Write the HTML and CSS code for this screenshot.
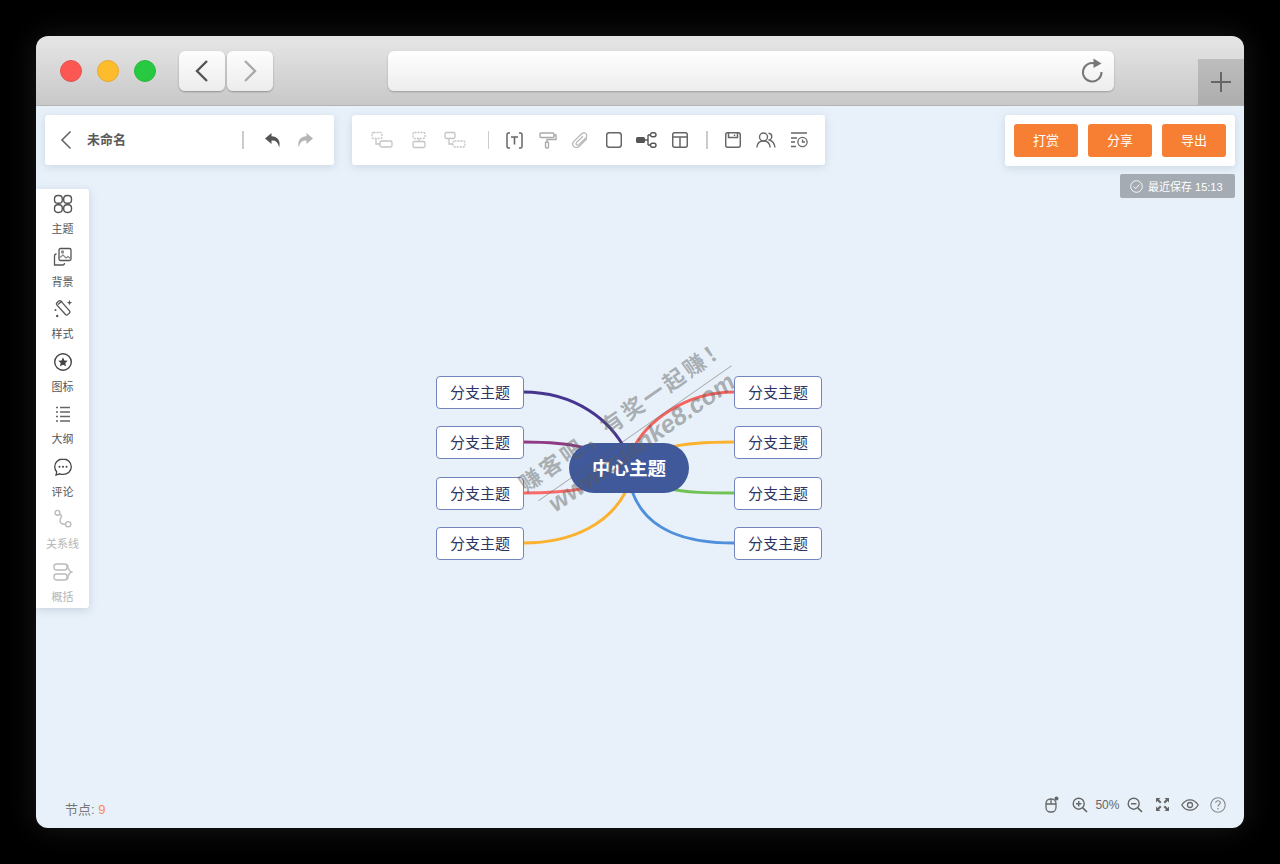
FILE: index.html
```html
<!DOCTYPE html>
<html lang="zh-CN">
<head>
    <meta charset="UTF-8">
    <title>未命名</title>
    <link rel="stylesheet" href="styles.css">
</head>
<body>

<div class="window">

    <!-- browser chrome -->
    <div class="titlebar">
        <div class="lights">
            <span class="light red"></span>
            <span class="light yellow"></span>
            <span class="light green"></span>
        </div>
        <div class="nav-pair">
            <div class="nav-btn">
                <svg width="18" height="24" viewBox="0 0 18 24"><path d="M14 2 L4 12 L14 22" class="chev dark"/></svg>
            </div>
            <div class="nav-btn">
                <svg width="18" height="24" viewBox="0 0 18 24"><path d="M4 2 L14 12 L4 22" class="chev light-chev"/></svg>
            </div>
        </div>
        <div class="address">
            <svg width="24" height="26" viewBox="0 0 24 26"><path d="M15.5 5.6 A9.3 9.3 0 1 0 21.5 14" fill="none" stroke="#777" stroke-width="2"/><path d="M13.5 0.5 L21.5 5.5 L13.5 10 Z" fill="#777"/></svg>
        </div>
        <div class="new-tab">
            <svg width="20" height="20" viewBox="0 0 20 20"><path d="M10 0 V20 M0 10 H20" stroke="#666" stroke-width="2"/></svg>
        </div>
    </div>

    <div class="canvas">

        <div class="top-row">
            <div class="panel file-panel">
                <svg class="back" width="12" height="20" viewBox="0 0 12 20"><path d="M10.5 1.5 L2 10 L10.5 18.5" fill="none" stroke="#666" stroke-width="1.6"/></svg>
                <span class="doc-name">未命名</span>
                <span class="sep sep-file"></span>
                <svg class="ico" width="18" height="18" viewBox="0 0 18 18"><path d="M7.5 2 L1 7.5 L7.5 13 V9.6 C11.5 9.4 14 11 15.2 16.5 C16.8 10 14 5.6 7.5 5.2 Z" fill="#555"/></svg>
                <svg class="ico redo" width="18" height="18" viewBox="0 0 18 18"><path d="M10.5 2 L17 7.5 L10.5 13 V9.6 C6.5 9.4 4 11 2.8 16.5 C1.2 10 4 5.6 10.5 5.2 Z" fill="#b5b5b5"/></svg>
            </div>

            <div class="panel tool-panel">
                <div class="tool-group wide">
                    <span class="cell"><svg width="22" height="18" viewBox="0 0 22 18"><g fill="none" stroke="#c4c4c4" stroke-width="1.3"><rect x="1" y="1.5" width="10" height="6" rx="1.5" stroke-dasharray="2 1"/><rect x="9" y="10" width="12" height="6" rx="1.5"/><path d="M5 7.5 V13 H9"/></g></svg></span>
                    <span class="cell"><svg width="14" height="18" viewBox="0 0 14 18"><g fill="none" stroke="#c4c4c4" stroke-width="1.3"><rect x="1" y="1.5" width="12" height="6" rx="1.5" stroke-dasharray="2 1"/><rect x="1" y="10.5" width="12" height="6" rx="1.5"/><path d="M7 7.5 V10.5"/></g></svg></span>
                    <span class="cell"><svg width="22" height="18" viewBox="0 0 22 18"><g fill="none" stroke="#c4c4c4" stroke-width="1.3"><rect x="1" y="1.5" width="10" height="6" rx="1.5"/><rect x="9" y="10" width="12" height="6" rx="1.5" stroke-dasharray="2 1"/><path d="M5 7.5 V13 H9"/></g></svg></span>
                </div>
                <span class="sep"></span>
                <div class="tool-group">
                    <span class="cell"><svg width="17" height="17" viewBox="0 0 17 17"><g fill="none" stroke="#666" stroke-width="1.5"><path d="M4 1 H2.5 Q1 1 1 2.5 V14.5 Q1 16 2.5 16 H4 M13 1 H14.5 Q16 1 16 2.5 V14.5 Q16 16 14.5 16 H13"/><path d="M5 5 H12 M8.5 5 V12.5" stroke-width="1.6"/></g></svg></span>
                    <span class="cell"><svg width="18" height="17" viewBox="0 0 18 17"><g fill="none" stroke="#aaa" stroke-width="1.4"><rect x="1" y="1" width="14" height="4.5" rx="1"/><path d="M15 3 H17 V7.5 H8 V10"/><rect x="6.5" y="10" width="3" height="6" rx="1"/></g></svg></span>
                    <span class="cell"><svg width="17" height="17" viewBox="0 0 17 17"><path d="M15 6.5 L7.5 14 C5.5 16 2.8 15.8 1.6 14.4 C0.3 13 0.4 10.8 2 9.2 L9.5 2 C11 0.6 13 0.8 14 1.8 C15 2.9 15 4.6 13.7 5.9 L6.8 12.6 C6 13.3 5 13.2 4.4 12.6 C3.9 12 4 11.2 4.7 10.4 L11 4.3" fill="none" stroke="#b5b5b5" stroke-width="1.2"/></svg></span>
                    <span class="cell"><svg width="16" height="16" viewBox="0 0 16 16"><rect x="0.7" y="0.7" width="14.6" height="14.6" rx="2.5" fill="none" stroke="#666" stroke-width="1.5"/></svg></span>
                    <span class="cell"><svg width="21" height="16" viewBox="0 0 21 16"><rect x="0" y="5" width="9" height="6" rx="1.5" fill="#555"/><g fill="none" stroke="#555" stroke-width="1.4"><path d="M9 8 H12 M12 3 V13"/><rect x="14.5" y="0.7" width="5.5" height="4" rx="2"/><rect x="14.5" y="11.3" width="5.5" height="4" rx="2"/><path d="M12 3 H14.5 M12 13 H14.5"/></g></svg></span>
                    <span class="cell"><svg width="16" height="16" viewBox="0 0 16 16"><g fill="none" stroke="#666" stroke-width="1.5"><rect x="0.7" y="0.7" width="14.6" height="14.6" rx="2"/><path d="M0.7 5 H15.3 M8 5 V15.3"/></g></svg></span>
                </div>
                <span class="sep sep-b"></span>
                <div class="tool-group">
                    <span class="cell"><svg width="16" height="16" viewBox="0 0 16 16"><g fill="none" stroke="#666" stroke-width="1.5"><rect x="0.7" y="0.7" width="14.6" height="14.6" rx="2"/><path d="M3.5 0.7 V5.5 H12.5 V0.7 M9.5 2.5 V4"/></g></svg></span>
                    <span class="cell"><svg width="20" height="16" viewBox="0 0 20 16"><g fill="none" stroke="#666" stroke-width="1.4"><circle cx="7.5" cy="5" r="4"/><path d="M0.8 15.5 C1.2 11 4 9 7.5 9 C11 9 13.8 11 14.2 15.5"/><path d="M12.5 1.2 C15 1.6 16 3.2 15.8 5 C15.6 6.6 14.6 7.6 13.5 8 C16.5 9 18.6 11.5 19 15.5"/></g></svg></span>
                    <span class="cell"><svg width="18" height="16" viewBox="0 0 18 16"><g fill="none" stroke="#666" stroke-width="1.3"><path d="M1 1 H17 M1 6 H7 M1 10 H5 M1 14.5 H6"/><circle cx="12.5" cy="10" r="4.6"/><path d="M12.5 7.5 V10 H15"/></g></svg></span>
                </div>
            </div>

            <div class="panel action-panel">
                <button class="action">打赏</button>
                <button class="action">分享</button>
                <button class="action">导出</button>
            </div>
        </div>

        <div class="saved">
            <svg width="13" height="13" viewBox="0 0 13 13"><circle cx="6.5" cy="6.5" r="5.8" fill="none" stroke="#fff" stroke-width="0.9"/><path d="M3.6 6.6 L5.7 8.6 L9.4 4.6" fill="none" stroke="#fff" stroke-width="0.9"/></svg>
            最近保存 15:13
        </div>

        <!-- left side menu -->
        <div class="side-menu">
            <div class="side-item">
                <svg width="20" height="20" viewBox="0 0 20 20"><g fill="none" stroke="#555" stroke-width="1.4"><rect x="1.5" y="1.5" width="7.8" height="7.8" rx="3.4"/><rect x="10.7" y="1.5" width="7.8" height="7.8" rx="3.4"/><rect x="1.5" y="10.7" width="7.8" height="7.8" rx="3.4"/><rect x="10.7" y="10.7" width="7.8" height="7.8" rx="3.4"/></g></svg>
                <span>主题</span>
            </div>
            <div class="side-item">
                <svg width="20" height="20" viewBox="0 0 20 20"><g fill="none" stroke="#555" stroke-width="1.3"><rect x="6" y="1.5" width="12" height="12" rx="1.5"/><path d="M6 11 L10 8 L13 11 L15 9.5 L18 12" stroke="#888"/><circle cx="9.5" cy="5" r="1" stroke="#888"/><path d="M3.5 7 Q1.5 7 1.5 9 V18 H10 Q11.5 18 11.5 16"/></g></svg>
                <span>背景</span>
            </div>
            <div class="side-item">
                <svg width="20" height="20" viewBox="0 0 20 20"><g fill="none" stroke="#555" stroke-width="1.3"><rect x="7.5" y="1" width="5.5" height="16" rx="1.5" transform="rotate(-42 10 9)"/><path d="M5 5.5 L9 2"/></g><path d="M16.5 1 L17.3 3 L19.2 3.6 L17.3 4.4 L16.5 6.3 L15.7 4.4 L13.9 3.6 L15.7 3 Z" fill="#555"/><circle cx="2.5" cy="11" r="1" fill="#555"/><circle cx="4.2" cy="17" r="1.2" fill="#555"/></svg>
                <span>样式</span>
            </div>
            <div class="side-item">
                <svg width="20" height="20" viewBox="0 0 20 20"><circle cx="10" cy="10" r="8.3" fill="none" stroke="#444" stroke-width="1.4"/><path d="M10 5.3 L11.4 8.4 L14.8 8.8 L12.3 11 L13 14.3 L10 12.7 L7 14.3 L7.7 11 L5.2 8.8 L8.6 8.4 Z" fill="#444"/></svg>
                <span>图标</span>
            </div>
            <div class="side-item">
                <svg width="20" height="20" viewBox="0 0 20 20"><g stroke="#666" stroke-width="1.3"><path d="M3 3.5 H5 M7 3.5 H17 M3 8 H5 M7 8 H17 M3 12.5 H5 M7 12.5 H17 M3 17 H5 M7 17 H17"/></g></svg>
                <span>大纲</span>
            </div>
            <div class="side-item">
                <svg width="20" height="20" viewBox="0 0 20 20"><path d="M10 2 C5.2 2 1.7 5.4 1.7 9.7 C1.7 11.7 2.5 13.5 3.7 14.8 L3 18 L6.6 16.8 C7.6 17.2 8.8 17.4 10 17.4 C14.8 17.4 18.3 14 18.3 9.7 C18.3 5.4 14.8 2 10 2 Z" fill="none" stroke="#444" stroke-width="1.3"/><circle cx="6.5" cy="9.7" r="1" fill="#444"/><circle cx="10" cy="9.7" r="1" fill="#444"/><circle cx="13.5" cy="9.7" r="1" fill="#444"/></svg>
                <span>评论</span>
            </div>
            <div class="side-item off">
                <svg width="20" height="20" viewBox="0 0 20 20"><g fill="none" stroke="#bbb" stroke-width="1.4"><circle cx="4.5" cy="3.8" r="2.4"/><circle cx="15.2" cy="15.2" r="2.6"/><path d="M6.5 5.5 C11 6.5 6.5 9.5 7 12 C7.5 14.8 10.5 15.5 12.6 15.2"/></g></svg>
                <span>关系线</span>
            </div>
            <div class="side-item off">
                <svg width="20" height="20" viewBox="0 0 20 20"><g fill="none" stroke="#bbb" stroke-width="1.4"><rect x="1" y="2" width="13" height="6" rx="2.5"/><rect x="1" y="12" width="13" height="6" rx="2.5"/><path d="M14.5 2.5 C15 6 15.5 9 18.5 10 C15.5 11 15 14 14.5 17.5"/></g></svg>
                <span>概括</span>
            </div>
        </div>

        <!-- mind map -->
        <svg class="links" width="1208" height="722" viewBox="0 0 1208 722">
            <g fill="none" stroke-width="3">
                <path d="M487 286 C540 286 575 315 590 345" stroke="#46358f"/>
                <path d="M487 336 C510 336 530 337 550 342" stroke="#8f3a85"/>
                <path d="M487 387 C505 387 530 386 550 382" stroke="#fb6a68"/>
                <path d="M487 437 C540 437 575 415 590 385" stroke="#fcb12f"/>
                <path d="M698 286 C650 286 610 315 596 345" stroke="#f4645f"/>
                <path d="M698 336 C675 336 650 337 630 342" stroke="#fcb12f"/>
                <path d="M698 387 C675 387 650 387 630 382" stroke="#6fc253"/>
                <path d="M698 437 C650 437 610 425 596 385" stroke="#4f8fdc"/>
            </g>
        </svg>

        <div class="node center">中心主题</div>
        <div class="node branch l1">分支主题</div>
        <div class="node branch l2">分支主题</div>
        <div class="node branch l3">分支主题</div>
        <div class="node branch l4">分支主题</div>
        <div class="node branch r1">分支主题</div>
        <div class="node branch r2">分支主题</div>
        <div class="node branch r3">分支主题</div>
        <div class="node branch r4">分支主题</div>

        <div class="watermark">
            <div class="wm-cn">赚客吧，有奖一起赚！</div>
            <div class="wm-url">www.zuanke8.com</div>
        </div>

        <div class="status-bar">
            <div class="count">节点: <b>9</b></div>
            <div class="zoom-tools">
                <svg width="14" height="17" viewBox="0 0 14 17"><g fill="none" stroke="#666" stroke-width="1.3"><rect x="1" y="3" width="10" height="13" rx="4.5"/><path d="M1 8 H11 M6 3 V8"/></g><circle cx="11.5" cy="2.5" r="2" fill="#666"/></svg>
                <svg width="16" height="16" viewBox="0 0 16 16"><g fill="none" stroke="#666" stroke-width="1.4"><circle cx="6.7" cy="6.7" r="5.5"/><path d="M10.8 10.8 L15 15" stroke-width="1.7"/><path d="M4 6.7 H9.4 M6.7 4 V9.4"/></g></svg>
                <span class="pct">50%</span>
                <svg width="16" height="16" viewBox="0 0 16 16"><g fill="none" stroke="#666" stroke-width="1.4"><circle cx="6.7" cy="6.7" r="5.5"/><path d="M10.8 10.8 L15 15" stroke-width="1.7"/><path d="M4 6.7 H9.4"/></g></svg>
                <svg width="13" height="13" viewBox="0 0 13 13"><g fill="#666"><path d="M0 0 H4.5 L3 1.5 L5.5 4 L4 5.5 L1.5 3 L0 4.5 Z"/><path d="M13 0 H8.5 L10 1.5 L7.5 4 L9 5.5 L11.5 3 L13 4.5 Z"/><path d="M0 13 H4.5 L3 11.5 L5.5 9 L4 7.5 L1.5 10 L0 8.5 Z"/><path d="M13 13 H8.5 L10 11.5 L7.5 9 L9 7.5 L11.5 10 L13 8.5 Z"/></g></svg>
                <svg width="18" height="12" viewBox="0 0 18 12"><g fill="none" stroke="#666" stroke-width="1.3"><path d="M0.8 6 C3 2.4 5.8 0.8 9 0.8 C12.2 0.8 15 2.4 17.2 6 C15 9.6 12.2 11.2 9 11.2 C5.8 11.2 3 9.6 0.8 6 Z"/><circle cx="9" cy="6" r="2.5"/></g></svg>
                <svg width="16" height="16" viewBox="0 0 16 16"><circle cx="8" cy="8" r="7.2" fill="none" stroke="#888" stroke-width="1.1"/><path d="M5.7 6 C5.7 4.5 6.8 3.8 8 3.8 C9.3 3.8 10.3 4.6 10.3 5.8 C10.3 7.4 8 7.6 8 9.6" fill="none" stroke="#888" stroke-width="1.1"/><circle cx="8" cy="11.7" r="0.8" fill="#888"/></svg>
            </div>
        </div>
    </div>
</div>

</body>
</html>
```

FILE: styles.css
```css
* {
    box-sizing: border-box;
}

body {
    margin: 0;
    width: 1280px;
    height: 864px;
    overflow: hidden;
    background: #000;
    padding: 36px;
    font-family: "Liberation Sans", "Noto Sans CJK SC", sans-serif;
}

.window {
    width: 1208px;
    height: 792px;
    border-radius: 12px;
    overflow: hidden;
    display: flex;
    flex-direction: column;
    box-shadow: 0 0 30px rgba(255, 255, 255, 0.1);
}

/* browser chrome */
.titlebar {
    height: 70px;
    flex: none;
    display: flex;
    background: linear-gradient(#e6e6e6, #c8c8c8);
    border-bottom: 1px solid #b4b4b4;
    padding-left: 24px;
    padding-top: 15px;
}

.lights {
    display: flex;
    gap: 15px;
    margin-top: 9px;
    height: 22px;
}

.light {
    width: 22px;
    height: 22px;
    border-radius: 50%;
}

.red { background: #fc5753; border: 1px solid #e5524e; }
.yellow { background: #fdbc2c; border: 1px solid #eaa92a; }
.green { background: #26c940; border: 1px solid #27b93b; }

.nav-pair {
    display: flex;
    gap: 2px;
    margin-left: 23px;
}

.nav-btn {
    width: 46px;
    height: 40px;
    border-radius: 6px;
    background: linear-gradient(#fdfdfd, #ececec);
    box-shadow: 0 1px 2px rgba(0, 0, 0, 0.3);
    display: flex;
    align-items: center;
    justify-content: center;
}

.chev {
    fill: none;
    stroke-width: 2.4;
}

.chev.dark { stroke: #555; }
.chev.light-chev { stroke: #aaa; }

.address {
    width: 726px;
    height: 40px;
    margin-left: 115px;
    border-radius: 6px;
    background: linear-gradient(#fff, #ededed);
    box-shadow: 0 1px 2px rgba(0, 0, 0, 0.25);
    display: flex;
    align-items: center;
    justify-content: flex-end;
    padding-right: 10px;
}

.new-tab {
    width: 46px;
    height: 46px;
    margin-left: 84px;
    margin-top: 8px;
    background: linear-gradient(#bdbdbd, #adadad);
    display: flex;
    align-items: center;
    justify-content: center;
}

/* canvas */
.canvas {
    flex: 1;
    position: relative;
    display: flex;
    flex-direction: column;
    background: #e8f1f9;
}

.top-row {
    display: flex;
    align-items: flex-start;
    padding: 9px 9px 0;
}

.panel {
    height: 50px;
    background: #fff;
    border-radius: 3px;
    box-shadow: 0 2px 8px rgba(120, 140, 170, 0.25);
    display: flex;
    align-items: center;
}

.file-panel {
    width: 289px;
    padding-left: 15px;
}

.doc-name {
    font-size: 13px;
    color: #5a5a5a;
    font-weight: bold;
    margin-left: 15px;
    width: 155px;
    padding-bottom: 3px;
}

.sep {
    width: 1.5px;
    height: 18px;
    background: #ccc;
    margin: 0 9px 0 14px;
}

.sep-file {
    margin: 0 20px 0 0;
}

.sep-b {
    margin-left: 10px;
}

.redo {
    margin-left: 14px;
}

.tool-panel {
    width: 473px;
    margin-left: 18px;
    padding-left: 12px;
}

.tool-group {
    display: flex;
    align-items: center;
}

.cell {
    width: 33px;
    display: flex;
    justify-content: center;
}

.wide .cell {
    width: 36.5px;
}

.action-panel {
    width: 230px;
    height: 51px;
    margin-left: auto;
    padding: 0 9px;
    justify-content: space-between;
}

.action {
    width: 64px;
    height: 33px;
    padding: 0 0 2px;
    border: 0;
    border-radius: 3px;
    background: #f77f33;
    color: #fff;
    font-family: inherit;
    font-size: 13px;
}

.saved {
    align-self: flex-end;
    margin: 8px 9px 0 0;
    width: 115px;
    height: 24px;
    border-radius: 2px;
    background: #a5abb2;
    color: #fff;
    font-size: 11px;
    display: flex;
    align-items: center;
    gap: 5px;
    padding-left: 10px;
}

/* side menu */
.side-menu {
    position: absolute;
    left: 0;
    top: 83px;
    width: 53px;
    height: 419px;
    background: #fff;
    border-radius: 0 3px 3px 0;
    box-shadow: 0 2px 8px rgba(120, 140, 170, 0.3);
    display: flex;
    flex-direction: column;
    padding-top: 5px;
}

.side-item {
    flex: none;
    height: 52.5px;
    display: flex;
    flex-direction: column;
    align-items: center;
    gap: 9px;
    font-size: 11px;
    line-height: 13px;
    color: #555;
}

.side-item.off {
    color: #b5b5b5;
}

/* mind map */
.links {
    position: absolute;
    left: 0;
    top: 0;
}

.node {
    position: absolute;
    display: flex;
    align-items: center;
    justify-content: center;
}

.center {
    left: 533px;
    top: 337px;
    width: 120px;
    height: 50px;
    border-radius: 25px;
    background: #40599b;
    color: #fff;
    font-size: 18.5px;
    font-weight: bold;
    padding-bottom: 2px;
}

.branch {
    width: 88px;
    height: 33px;
    background: #fff;
    border: 1px solid #7484bd;
    border-radius: 4px;
    color: #2b3566;
    font-size: 15px;
    padding-bottom: 2px;
}

.l1, .l2, .l3, .l4 { left: 400px; }
.r1, .r2, .r3, .r4 { left: 698px; }
.l1, .r1 { top: 270px; }
.l2, .r2 { top: 320px; }
.l3, .r3 { top: 371px; }
.l4, .r4 { top: 421px; }

/* site watermark pasted over the shot */
.watermark {
    position: absolute;
    left: 477px;
    top: 289px;
    width: 236px;
    transform: rotate(-35deg);
    color: rgba(90, 90, 90, 0.45);
    font-weight: bold;
    text-align: center;
}

.wm-cn {
    display: flex;
    justify-content: center;
    padding: 0 0 7px 3px;
    font-size: 22px;
    letter-spacing: 3px;
    border-bottom: 1.5px solid rgba(90, 90, 90, 0.45);
    white-space: nowrap;
}

.wm-url {
    margin-top: -4px;
    font-size: 25px;
    font-style: italic;
    white-space: nowrap;
}

/* bottom bar */
.status-bar {
    margin-top: auto;
    display: flex;
    justify-content: space-between;
    align-items: flex-start;
    padding: 0 12px 10px 29px;
}

.count {
    margin-top: 6px;
    font-size: 13px;
    color: #777;
}

.count b {
    font-weight: normal;
    color: #f88a55;
}

.zoom-tools {
    display: grid;
    grid-template-columns: repeat(7, 27.7px);
    justify-items: center;
    align-items: center;
    margin-top: 3px;
}

.pct {
    font-size: 12px;
    color: #666;
}
```
